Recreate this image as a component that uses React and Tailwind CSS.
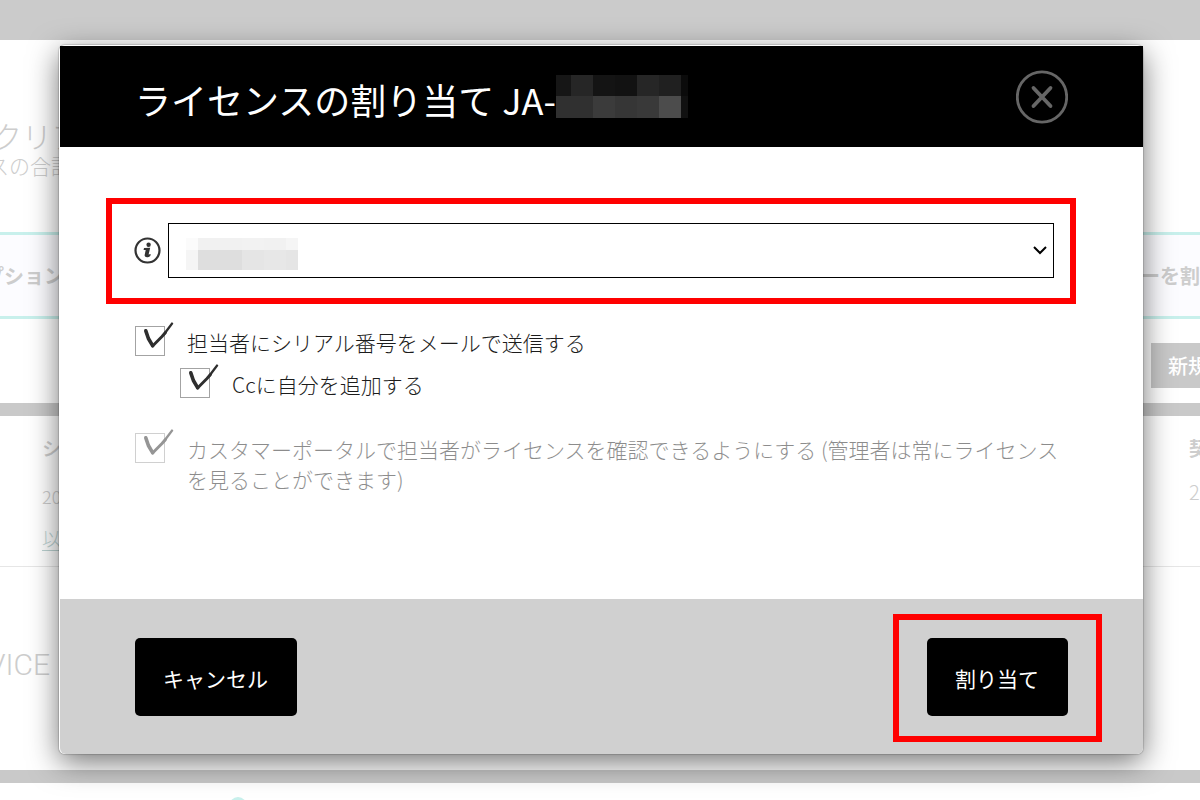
import React from "react";

const TITLE_MOSAIC = [
  ["bg-[#161616]", "bg-[#262626]", "bg-[#141414]", "bg-[#121212]", "bg-[#262626]", "bg-[#202020]", "bg-[#0b0b0b]"],
  ["bg-[#303030]", "bg-[#303030]", "bg-[#3b3b3b]", "bg-[#363636]", "bg-[#393939]", "bg-[#4c4c4c]", "bg-[#111111]"],
];

const SELECT_MOSAIC = [
  "bg-[#fbfbfb]", "bg-[#f1f1f1]", "bg-[#f2f2f2]", "bg-[#f1f1f1]", "bg-[#f5f5f5]",
  "bg-[#f5f5f5]", "bg-[#dedede]", "bg-[#e5e5e5]", "bg-[#e7e7e7]", "bg-[#e5e5e5]",
];

function CheckRow({ id, children, disabled, className }) {
  return (
    <div className={`flex items-start ${disabled ? "opacity-50" : ""} ${className}`}>
      <span className="relative size-[30px] shrink-0">
        <input
          id={id}
          type="checkbox"
          defaultChecked
          disabled={disabled}
          className="peer block size-full appearance-none border border-[#a3a3a3] bg-white"
        />
        <svg
          viewBox="0 0 40 30"
          className="pointer-events-none absolute -top-1 left-0 hidden h-[30px] w-10 peer-checked:block"
          fill="none"
          stroke="#2e2e2e"
          strokeLinecap="round"
          strokeLinejoin="round"
        >
          <path d="M10.8 8.8 L13.4 16.5 L17.6 23.6" strokeWidth="3.6" />
          <path d="M17.6 24 L27 14.5 L30.5 10.5" strokeWidth="2.9" />
          <path d="M29 12.3 L37 1.6" strokeWidth="2.4" />
        </svg>
      </span>
      <label htmlFor={id} className="ml-[22px] pt-px text-[21px] leading-[30px] text-[#1c1c1c]">
        {children}
      </label>
    </div>
  );
}

function Backdrop() {
  return (
    <div aria-hidden="true" className="flex min-h-[800px] flex-col text-[#cdcdcd]">
      <div className="h-10 bg-[#cbcbcb]" />
      <div className="h-48 pt-[75px]">
        <p className="-ml-2 text-[30px] leading-10 font-light">クリア</p>
        <p className="-ml-3 text-[21px] leading-5 font-light">スの合計</p>
      </div>
      <div className="flex h-[87px] items-center justify-between overflow-hidden border-y-3 border-[#c8f0ec] bg-[#fcfcff] text-[20px] font-bold">
        <span className="-ml-4">プション</span>
        <span>ーを割</span>
      </div>
      <div className="flex h-[84px] justify-end overflow-hidden pt-6">
        <span className="h-[45px] w-[49px] overflow-hidden bg-[#c9c9c9] pl-[17px] text-[20px] leading-[45px] font-medium whitespace-nowrap text-white">
          新規
        </span>
      </div>
      <div className="h-[13px] bg-[#c9c9c9]" />
      <div className="flex h-[151px] justify-between overflow-hidden border-b border-[#e6e6e6] pt-4 pl-[42px] text-[19px]">
        <div>
          <p className="leading-8 font-medium">シ</p>
          <p className="mt-4 text-[18px] leading-8 font-light">20</p>
          <p className="mt-[10px] leading-8 font-light text-[#bcd3d2] underline underline-offset-4">以</p>
        </div>
        <div className="w-[11px] overflow-hidden">
          <p className="w-5 leading-8 font-bold">契</p>
          <p className="mt-3 text-[20px] leading-8 font-light">2</p>
        </div>
      </div>
      <div className="h-[203px] overflow-hidden pt-20 text-[30px] leading-9 font-light">
        <p className="-ml-[13px] font-[Roboto]">VICE</p>
      </div>
      <div className="h-[13px] bg-[#c9c9c9]" />
      <div className="h-[17px] overflow-hidden pt-[14px] pl-[229px]">
        <div className="size-[18px] rounded-full bg-[#c8f0ec]" />
      </div>
    </div>
  );
}

export default function App() {
  return (
    <div
      lang="ja"
      className="relative overflow-hidden bg-white font-['Noto_Sans_CJK_JP',sans-serif]"
    >
      <Backdrop />
      <div className="absolute inset-0 pt-[45px] pr-[57px] pl-[59px]">
        <section
          role="dialog"
          aria-labelledby="dialog-title"
          className="rounded-md border-t border-l border-white bg-white shadow-[0_0_1px_1px_rgba(0,0,0,0.15),0_8px_30px_rgba(0,0,0,0.55)]"
        >
          <header className="flex h-[101px] items-center bg-black pr-[75px] pl-[75px] text-white">
            <h1 id="dialog-title" className="mt-1 text-[36px] leading-[50px] font-normal whitespace-nowrap">
              ライセンスの割り当て JA-
            </h1>
            <span className="grid grid-cols-[15px_22px_22px_22px_22px_22px_7px] grid-rows-[21px_22px]">
              {TITLE_MOSAIC.flat().map((tone, i) => (
                <span key={i} className={tone} />
              ))}
            </span>
            <button type="button" aria-label="閉じる" className="ml-auto">
              <svg viewBox="0 0 52 54" className="h-[54px] w-[52px]" fill="none" stroke="#666">
                <ellipse cx="26" cy="27" rx="24.7" ry="25.2" strokeWidth="2.8" />
                <path d="M17.5 18 L34.5 36 M34.5 18 L17.5 36" strokeWidth="3.8" strokeLinecap="round" />
              </svg>
            </button>
          </header>

          <div className="h-[452px] pt-[76px] pr-[75px] pl-[75px]">
            <div className="relative flex h-[55px] items-center pr-[14px]">
              <label htmlFor="assignee" aria-label="担当者" className="-ml-px mr-[7px] shrink-0">
                <svg viewBox="0 0 27 27" className="size-[27px]">
                  <circle cx="13.5" cy="13.5" r="12" fill="none" stroke="#333" strokeWidth="2.2" />
                  <circle cx="14.6" cy="7.8" r="2.2" fill="#333" />
                  <path
                    d="M10 11.1 L16.2 10.7 L14.6 17.6 L16.7 17 L16.3 18.9 C14.5 20.6 10.5 20.8 10.6 18.2 L11.7 13 L9.6 13 Z"
                    fill="#333"
                  />
                </svg>
              </label>
              <div className="relative h-full flex-1">
                <select
                  id="assignee"
                  className="size-full appearance-none border border-black bg-white px-4 text-[21px]"
                >
                  <option value=""></option>
                </select>
                <span className="pointer-events-none absolute top-[15px] left-[18px] grid grid-cols-[12px_44px_22px_22px_12px] grid-rows-[12px_20px]">
                  {SELECT_MOSAIC.map((tone, i) => (
                    <span key={i} className={tone} />
                  ))}
                </span>
                <svg
                  viewBox="0 0 14 9"
                  className="pointer-events-none absolute top-[23px] right-[7px] h-[9px] w-[14px]"
                  fill="none"
                  stroke="#000"
                  strokeWidth="2"
                >
                  <path d="M1 1 L7 7 L13 1" />
                </svg>
              </div>
              <span className="pointer-events-none absolute -top-[25px] -right-2 -bottom-[26px] -left-[29px] border-6 border-[#ff0000]" />
            </div>

            <div className="mt-12 font-light">
              <CheckRow id="send-mail" className="">
                担当者にシリアル番号をメールで送信する
              </CheckRow>
              <CheckRow id="cc-me" className="mt-[11px] ml-[45px]">
                Ccに自分を追加する
              </CheckRow>
              <CheckRow id="portal" className="mt-[34px]" disabled>
                カスタマーポータルで担当者がライセンスを確認できるようにする (管理者は常にライセンスを見ることができます)
              </CheckRow>
            </div>
          </div>

          <footer className="flex h-[155px] items-center justify-between rounded-b-md bg-[#d0d0d0] px-[75px]">
            <button type="button" className="h-[78px] rounded-[5px] bg-black pt-1 pr-[29px] pl-7 text-[21px] font-normal text-white">
              キャンセル
            </button>
            <div className="relative">
              <button type="button" className="h-[78px] rounded-[5px] bg-black pt-1 pr-[29px] pl-7 text-[21px] font-normal text-white">
                割り当て
              </button>
              <span className="pointer-events-none absolute -top-6 -right-[34px] -bottom-[26px] -left-[34px] border-6 border-[#ff0000]" />
            </div>
          </footer>
        </section>
      </div>
    </div>
  );
}
